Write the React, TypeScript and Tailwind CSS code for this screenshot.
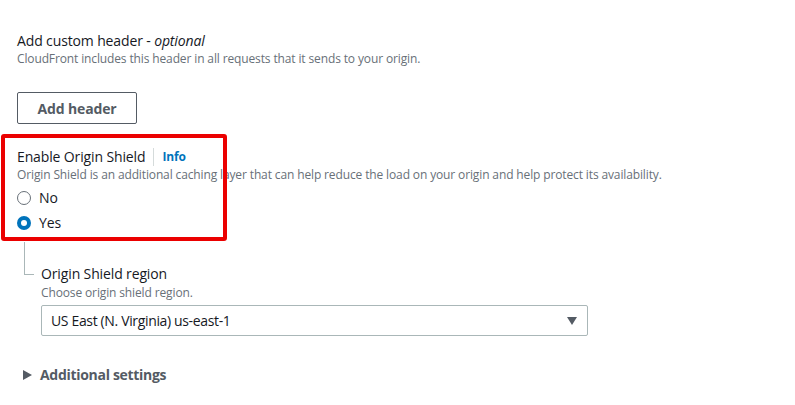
import React from "react";

const font = { fontFamily: '"Open Sans", "Noto Sans", Arial, sans-serif' };

function Radio({ checked, label }: { checked?: boolean; label: string }) {
  return (
    <label className="flex h-[25px] items-center gap-[8px]">
      {checked ? (
        <span className="flex h-[14px] w-[14px] items-center justify-center rounded-full bg-[#0073bb]">
          <span className="h-[6px] w-[6px] rounded-full bg-white" />
        </span>
      ) : (
        <span className="h-[14px] w-[14px] rounded-full border border-[#687078] bg-white" />
      )}
      <span className="text-[14px] text-[#16191f]">{label}</span>
    </label>
  );
}

export default function App() {
  return (
    <div className="relative h-[405px] w-[795px] overflow-hidden bg-white tracking-[-0.13px]" style={font}>
      <div className="pl-[17px] pt-[31px]">
        <div className="text-[14px] leading-[20px] text-[#16191f]">
          Add custom header - <i>optional</i>
        </div>
        <div className="text-[12px] leading-[16px] text-[#687078]">
          CloudFront includes this header in all requests that it sends to your origin.
        </div>
        <button className="mt-[25px] h-[32px] w-[120px] rounded-[2px] border border-[#545b64] text-[14px] font-bold text-[#545b64]">
          Add header
        </button>

        <div className="mt-[23px] flex items-center text-[14px] leading-[20px] text-[#16191f]">
          <span>Enable Origin Shield</span>
          <span className="mx-[8px] h-[18px] w-px bg-[#d5dbdb]" />
          <span className="text-[12px] font-bold text-[#0073bb]">Info</span>
        </div>
        <div className="text-[12px] leading-[16px] text-[#687078]">
          Origin Shield is an additional caching layer that can help reduce the load on your origin and help protect its availability.
        </div>
        <div className="mt-[2px]">
          <Radio label="No" />
          <Radio checked label="Yes" />
        </div>

        <div className="flex">
          <div className="ml-[7px] mt-[7px] h-[33px] w-[10px] border-b border-l border-[#aab7b8]" />
          <div className="ml-[7px] mt-[29px] flex-1">
            <div className="text-[14px] leading-[20px] text-[#16191f]">Origin Shield region</div>
            <div className="text-[12px] leading-[18px] text-[#687078]">Choose origin shield region.</div>
            <div className="mt-[3px] flex h-[31px] w-[547px] items-center justify-between rounded-[2px] border border-[#aab7b8] pl-[9px] pr-[10px]">
              <span className="text-[14px] tracking-[-0.35px] text-[#16191f]">US East (N. Virginia) us-east-1</span>
              <svg width="10" height="8" viewBox="0 0 10 8">
                <path d="M0 0 L10 0 L5 8 Z" fill="#545b64" />
              </svg>
            </div>
          </div>
        </div>

        <div className="mt-[28px] flex items-center gap-[8px]">
          <svg width="9" height="10" viewBox="0 0 9 10" className="ml-[6px]">
            <path d="M0 0 L9 5 L0 10 Z" fill="#545b64" />
          </svg>
          <span className="text-[14px] font-bold tracking-[-0.3px] text-[#545b64]">Additional settings</span>
        </div>
      </div>

      <div className="pointer-events-none absolute left-[1px] top-[134px] h-[107px] w-[226px] rounded-[3px] border-[4px] border-[#eb0000]" />
    </div>
  );
}
